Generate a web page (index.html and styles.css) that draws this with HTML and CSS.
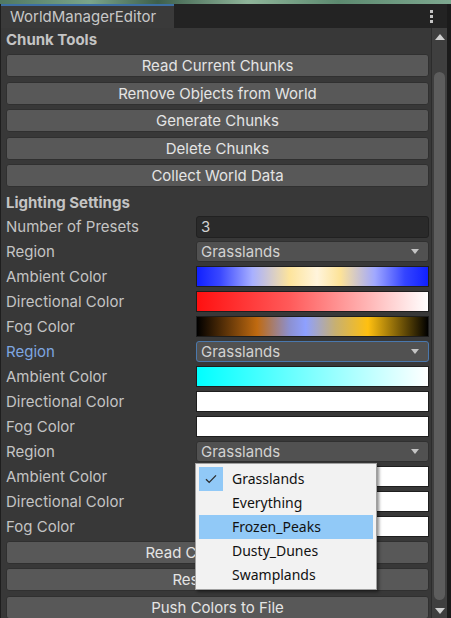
FILE: index.html
```html
<!DOCTYPE html>
<html lang="en">
<head>
    <meta charset="UTF-8">
    <title>WorldManagerEditor</title>
    <link rel="stylesheet" href="styles.css">
</head>
<body>
    <div class="backdrop"></div>
    <div class="window">
        <div class="tabbar">
            <div class="tab">WorldManagerEditor</div>
            <div class="kebab"><span></span><span></span><span></span></div>
        </div>
        <div class="body">
            <div class="content">
                <div class="section">Chunk Tools</div>
                <button class="btn">Read Current Chunks</button>
                <button class="btn">Remove Objects from World</button>
                <button class="btn">Generate Chunks</button>
                <button class="btn">Delete Chunks</button>
                <button class="btn">Collect World Data</button>

                <div class="section lighting">Lighting Settings</div>
                <div class="row">
                    <label>Number of Presets</label>
                    <div class="number">3</div>
                </div>

                <div class="row">
                    <label>Region</label>
                    <div class="dropdown">Grasslands<i class="arrow"></i></div>
                </div>
                <div class="row">
                    <label>Ambient Color</label>
                    <div class="swatch ambient-a"></div>
                </div>
                <div class="row">
                    <label>Directional Color</label>
                    <div class="swatch directional-a"></div>
                </div>
                <div class="row">
                    <label>Fog Color</label>
                    <div class="swatch fog-a"></div>
                </div>

                <div class="row focused">
                    <label>Region</label>
                    <div class="dropdown">Grasslands<i class="arrow"></i></div>
                </div>
                <div class="row">
                    <label>Ambient Color</label>
                    <div class="swatch ambient-b"></div>
                </div>
                <div class="row">
                    <label>Directional Color</label>
                    <div class="swatch"></div>
                </div>
                <div class="row">
                    <label>Fog Color</label>
                    <div class="swatch"></div>
                </div>

                <div class="row">
                    <label>Region</label>
                    <div class="dropdown">Grasslands<i class="arrow"></i></div>
                </div>
                <div class="row">
                    <label>Ambient Color</label>
                    <div class="swatch"></div>
                </div>
                <div class="row">
                    <label>Directional Color</label>
                    <div class="swatch"></div>
                </div>
                <div class="row">
                    <label>Fog Color</label>
                    <div class="swatch"></div>
                </div>

                <button class="btn first">Read Current Colors</button>
                <button class="btn">Reset Colors</button>
                <button class="btn">Push Colors to File</button>
            </div>
            <div class="scrollbar">
                <i class="up"></i>
                <div class="thumb"></div>
                <i class="down"></i>
            </div>
        </div>
    </div>

    <ul class="popup">
        <li class="checked"><span class="check">
            <svg width="12" height="10" viewBox="0 0 12 10"><path d="M1 5.2 L4.2 8.4 L11 1.4" fill="none" stroke="#2b2b2b" stroke-width="1.3"/></svg>
        </span>Grasslands</li>
        <li>Everything</li>
        <li class="hover">Frozen_Peaks</li>
        <li>Dusty_Dunes</li>
        <li>Swamplands</li>
    </ul>
</body>
</html>
```

FILE: styles.css
```css
* {
    box-sizing: border-box;
}

body {
    margin: 0;
    width: 451px;
    height: 618px;
    overflow: hidden;
    background-color: #383838;
    font-family: Inter, "Noto Sans", sans-serif;
    font-size: 15px;
    color: #c4c4c4;
    position: relative;
}

.backdrop {
    height: 4px;
    background: linear-gradient(90deg, #4f7862 0%, #7aa58a 20%, #3d5f4c 35%, #8fb59a 55%, #5d8a70 75%, #7ea890 100%);
}

.window {
    border-left: 1px solid #1e1e1e;
    border-right: 4px solid #1b1b1b;
    height: 614px;
    display: flex;
    flex-direction: column;
}

.tabbar {
    height: 24px;
    background-color: #232323;
    display: flex;
    align-items: stretch;
    justify-content: space-between;
    flex-shrink: 0;
}

.tab {
    width: 173px;
    background-color: #3a3a3a;
    border-top: 2px solid #3d6fa3;
    padding-left: 9px;
    line-height: 21px;
    color: #c8c8c8;
}

.kebab {
    display: flex;
    flex-direction: column;
    justify-content: center;
    gap: 2px;
    padding-right: 14px;
}

.kebab span {
    width: 3px;
    height: 3px;
    background-color: #c4c4c4;
}

.body {
    flex: 1;
    display: flex;
    min-height: 0;
}

.content {
    width: 430px;
    padding: 0 2px 0 5px;
}

.section {
    height: 24px;
    line-height: 24px;
    font-weight: 700;
    color: #c4c4c4;
}

.section.lighting {
    height: 22px;
    line-height: 21px;
}

.btn {
    display: block;
    width: 100%;
    height: 23px;
    margin: 2px 0 4.5px;
    padding: 0;
    background-color: #585858;
    border: 1px solid #303030;
    border-radius: 3px;
    font-family: inherit;
    font-size: 15px;
    color: #e4e4e4;
    text-align: center;
}

.btn + .btn {
    margin-top: 0;
}

.row {
    height: 25px;
    display: grid;
    grid-template-columns: 190px 1fr;
    align-items: start;
}

.row label {
    line-height: 25px;
}

.row.focused label {
    color: #7ea6e0;
}

.number,
.dropdown,
.swatch {
    margin-top: 2px;
    height: 21px;
    border-radius: 3px;
}

.number {
    height: 22px;
    background-color: #2a2a2a;
    border: 1px solid #212121;
    padding-left: 4px;
    line-height: 20px;
    color: #d2d2d2;
}

.dropdown {
    position: relative;
    background-color: #515151;
    border: 1px solid #303030;
    padding-left: 4px;
    line-height: 19px;
    color: #d2d2d2;
}

.row.focused .dropdown {
    border-color: #4a78ad;
}

.arrow {
    position: absolute;
    right: 9px;
    top: 7px;
    border-left: 4.5px solid transparent;
    border-right: 4.5px solid transparent;
    border-top: 5px solid #c4c4c4;
}

.swatch {
    background-color: #ffffff;
    border: 1px solid #1e1e1e;
    border-radius: 0;
}

.ambient-a {
    background: linear-gradient(90deg, #1020ff 0%, #3a48ff 10%, #a8b0ff 24%, #fde49c 40%, #fff4dc 52%, #fde398 62%, #a0a8ff 77%, #3444ff 90%, #1020ff 100%);
}

.directional-a {
    background: linear-gradient(90deg, #ff1010 0%, #ff5a5a 40%, #ffb8b8 75%, #ffffff 100%);
}

.fog-a {
    background: linear-gradient(90deg, #000000 0%, #c06a10 26%, #8c90d0 40%, #8ea0ff 47%, #c8b070 60%, #ffc010 74%, #000000 100%);
}

.ambient-b {
    background: linear-gradient(90deg, #00ffff 0%, #80ffff 50%, #ffffff 100%);
}

.btn.first {
    margin-top: 2px;
}

.scrollbar {
    width: 16px;
    background-color: #3f3f3f;
    border-left: 1px solid #2c2c2c;
    display: flex;
    flex-direction: column;
    align-items: center;
    padding: 6px 0 4px;
}

.up {
    border-left: 5px solid transparent;
    border-right: 5px solid transparent;
    border-bottom: 6px solid #d0d0d0;
}

.thumb {
    width: 11px;
    flex: 1;
    margin: 32px 0 8px;
    background-color: #5d5d5d;
    border-radius: 6px;
}

.down {
    border-left: 5px solid transparent;
    border-right: 5px solid transparent;
    border-top: 6px solid #d0d0d0;
}

/* open region menu */
.popup {
    position: absolute;
    left: 195px;
    top: 463px;
    width: 182px;
    margin: 0;
    padding: 3px 3px 2px;
    list-style: none;
    background-color: #f2f2f2;
    border: 1px solid #a0a0a0;
    box-shadow: 2px 2px 3px rgba(0, 0, 0, 0.45);
    font-family: "Noto Sans", sans-serif;
    font-size: 14px;
    color: #111111;
}

.popup li {
    position: relative;
    height: 24px;
    line-height: 24px;
    padding-left: 33px;
}

.popup li.hover {
    background-color: #91c9f7;
}

.check {
    position: absolute;
    left: 0;
    top: 0;
    width: 24px;
    height: 24px;
    background-color: #91c9f7;
    display: flex;
    align-items: center;
    justify-content: center;
}
```
